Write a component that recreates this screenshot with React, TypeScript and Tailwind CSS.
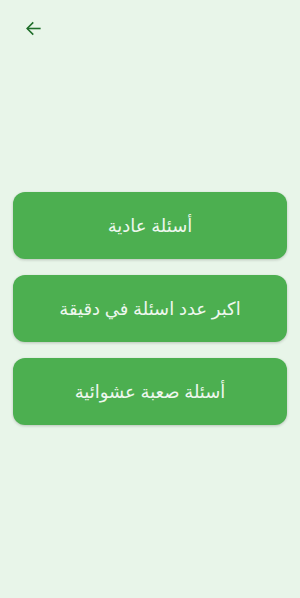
import React from "react";

export default function App() {
  const items = ["أسئلة عادية", "اكبر عدد اسئلة في دقيقة", "أسئلة صعبة عشوائية"];
  return (
    <div className="w-[300px] h-[598px] bg-[#e8f5e9] flex flex-col" style={{ fontFamily: '"Noto Sans", "DejaVu Sans", sans-serif' }}>
      <div className="h-14 flex items-center pl-[24px]">
        <svg width="19" height="19" viewBox="0 0 24 24" fill="none" stroke="#1f6e2a" strokeWidth="2" strokeLinecap="square">
          <path d="M20 12H5" />
          <path d="M11 5l-7 7 7 7" />
        </svg>
      </div>
      <div className="mt-[136px] px-[13px] flex flex-col gap-[16px]">
        {items.map((t) => (
          <button key={t} dir="rtl" className="h-[67px] w-full rounded-[12px] bg-[#4caf50] text-[#eef7ee] text-[18px] flex items-center justify-center shadow-[0_1px_3px_rgba(0,0,0,0.2)]">
            {t}
          </button>
        ))}
      </div>
    </div>
  );
}
